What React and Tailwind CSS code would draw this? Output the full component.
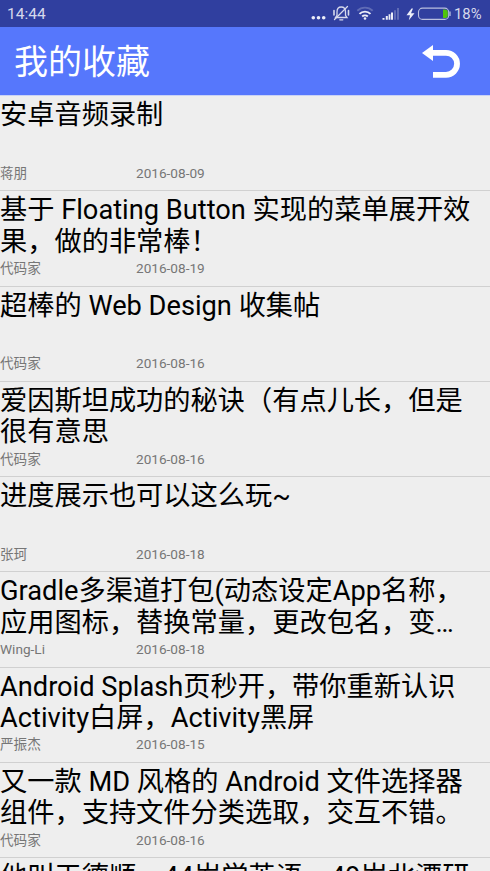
const ITEMS = [
  { lines: ['安卓音频录制'], author: '蒋朋', date: '2016-08-09' },
  { lines: ['基于 Floating Button 实现的菜单展开效', '果，做的非常棒！'], author: '代码家', date: '2016-08-19' },
  { lines: ['超棒的 Web Design 收集帖'], author: '代码家', date: '2016-08-16' },
  { lines: ['爱因斯坦成功的秘诀（有点儿长，但是', '很有意思'], author: '代码家', date: '2016-08-16' },
  { lines: ['进度展示也可以这么玩~'], author: '张珂', date: '2016-08-18' },
  { lines: ['Gradle多渠道打包(动态设定App名称，', '应用图标，替换常量，更改包名，变…'], author: 'Wing-Li', date: '2016-08-18' },
  { lines: ['Android Splash页秒开，带你重新认识', 'Activity白屏，Activity黑屏'], author: '严振杰', date: '2016-08-15' },
  { lines: ['又一款 MD 风格的 Android 文件选择器', '组件，支持文件分类选取，交互不错。'], author: '代码家', date: '2016-08-16' },
  { lines: ['他叫王德顺，44岁学英语，49岁北漂研'], author: '', date: '' },
];

function StatusBar() {
  return (
    <div className="flex h-[27px] shrink-0 items-center justify-between bg-[#303f9f] pl-[7px] text-[#d6d9ec]">
      <span className="pt-[3px] text-[15.5px] leading-none">14:44</span>
      <svg width="190" height="27" viewBox="0 0 190 27" fill="none">
        <g fill="#eceef8">
          <circle cx="13.3" cy="17.7" r="1.8" />
          <circle cx="18.5" cy="17.7" r="1.8" />
          <circle cx="23.7" cy="17.7" r="1.8" />
        </g>
        <g stroke="#d6d9ec" strokeWidth="1.3" strokeLinecap="round">
          <path d="M35.5 17.500h11.500l-1.500-2.200V12c0-3-1.700-5-4.300-5S37 9 37 12v3.300z" />
          <path d="M39.800 19.800h3M34.500 19.500L47.500 6.500" />
          <path d="M34 10.500v4.500M48.500 10.500v4.500" strokeWidth="1.6" />
        </g>
        <g strokeWidth="1.9">
          <path d="M57.300 10.800a11 11 0 0 1 15.400 0" stroke="#5f6bb5" />
          <path d="M59.500 13.900a7.700 7.700 0 0 1 11 0M62.200 16.500a4 4 0 0 1 5.600 0" stroke="#eceef8" />
          <circle cx="65" cy="18.500" r="1.300" fill="#eceef8" />
        </g>
        <path d="M82.500 18h2v1.700h-2zM85.800 16h2v3.700h-2zM88.600 14.200h1.800v5.500h-1.800zM91 12.500h2v7.200h-2z" fill="#eceef8" />
        <path d="M94 10.300h2v9.400h-2zM97 8h2v11.700h-2z" fill="#5f6bb5" />
        <path d="M111.500 8.500l-5 6.700h3.500l-1.200 5 5.700-7h-3.500l2-4.700z" fill="#eceef8" />
        <path d="M122.500 8.100h22.200a4 4 0 0 1 4 4v3.300a4 4 0 0 1-4 4h-22.200a4 4 0 0 1-4-4v-3.300a4 4 0 0 1 4-4z" stroke="#b9bfdf" strokeWidth="1.100" />
        <path d="M143 9.500h2a2.800 2.800 0 0 1 2.800 2.800v3a2.800 2.800 0 0 1-2.800 2.800h-2z" fill="#4fc40c" />
        <path d="M150 11.500v4.500" stroke="#b9bfdf" strokeWidth="1.300" />
        <text x="154" y="19.200" fill="#d6d9ec" fontSize="14.500" textLength="27.500" lengthAdjust="spacingAndGlyphs">18%</text>
      </svg>
    </div>
  );
}

function Header() {
  return (
    <header className="flex h-[68px] shrink-0 items-center justify-between bg-[#5677fc] pr-[29px] pl-[14px] text-white">
      <h1 className="pt-[2px] text-[34px] leading-none">我的收藏</h1>
      <svg width="39" height="34" viewBox="0 0 39 34" fill="none">
        <path d="M0 9L11 1v16z" fill="white" />
        <path d="M10 8.800h14a11.050 11.050 0 0 1 0 22.100H11" stroke="white" strokeWidth="5.800" />
      </svg>
    </header>
  );
}

function Item({ lines, author, date }) {
  return (
    <li className="flex h-[95.250px] shrink-0 flex-col border-b border-[#d0d0d0]">
      <div className="h-[67.800px] shrink-0 pt-[4.200px] text-[27.220px] leading-[31.200px] whitespace-nowrap text-black">
        {lines.map((line) => (
          <p key={line}>{line}</p>
        ))}
      </div>
      <div className="flex text-[13.610px] leading-[18px] text-[#767676]">
        <span className="w-[136px]">{author}</span>
        <span>{date}</span>
      </div>
    </li>
  );
}

export default function App() {
  return (
    <div className="flex h-[871px] w-[490px] flex-col overflow-hidden bg-[#eeeeee] font-[Roboto,'Noto_Sans_CJK_SC',sans-serif]" lang="zh-CN">
      <StatusBar />
      <Header />
      <ul className="flex min-h-0 flex-1 flex-col overflow-hidden border-t border-[#c9d2f5]">
        {ITEMS.map((item) => (
          <Item key={item.lines[0]} {...item} />
        ))}
      </ul>
    </div>
  );
}
